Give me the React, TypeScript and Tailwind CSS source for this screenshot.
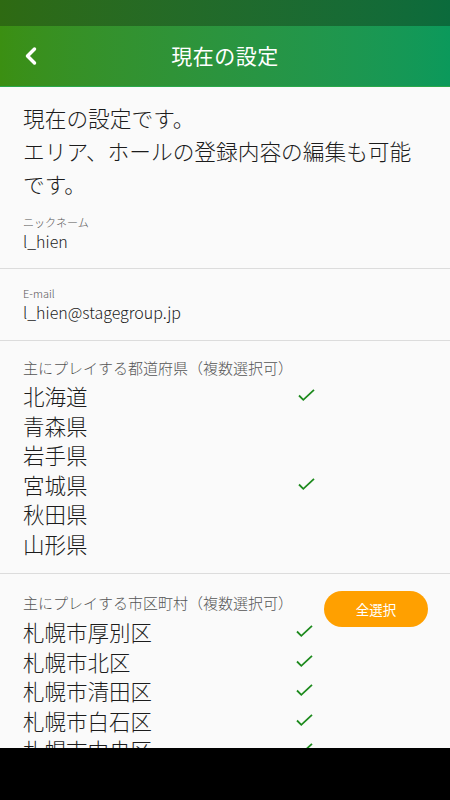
import { ChevronLeft } from 'lucide-react';

const PREFS = [
  { name: '北海道', on: true },
  { name: '青森県', on: false },
  { name: '岩手県', on: false },
  { name: '宮城県', on: true },
  { name: '秋田県', on: false },
  { name: '山形県', on: false },
];

const CITIES = ['札幌市厚別区', '札幌市北区', '札幌市清田区', '札幌市白石区', '札幌市中央区'];

function Check() {
  return (
    <svg width="17" height="13" viewBox="0 0 17 13" className="shrink-0">
      <path d="M1 6.5 L5.3 10.8 L16 0.8" fill="none" stroke="#1d8a1d" strokeWidth="1.8" />
    </svg>
  );
}

function Row({ name, on }: { name: string; on: boolean }) {
  return (
    <div className="flex items-center justify-between h-[29.5px]">
      <span className="text-[21.5px] leading-[29.5px] text-[#1c1c1c]">{name}</span>
      {on && <Check />}
    </div>
  );
}

export default function App() {
  return (
    <div className="h-[800px] w-[450px] flex flex-col overflow-hidden bg-[#fafafa] font-light" style={{ fontFamily: '"Noto Sans CJK JP", "Noto Sans", sans-serif' }}>
      {/* status bar */}
      <div className="h-[26px] shrink-0 bg-linear-to-r from-[#2e6a12] to-[#0b6b3c]" />

      {/* header */}
      <div className="h-[61px] shrink-0 relative flex items-center justify-center bg-linear-to-r from-[#3b8f12] to-[#0b995b] border-b border-[#2aa84a]">
        <button className="absolute left-[17px] top-[16px] text-white">
          <ChevronLeft className="w-[28px] h-[28px]" strokeWidth={3} />
        </button>
        <h1 className="text-[21px] text-white font-normal tracking-[0.5px]">現在の設定</h1>
      </div>

      <div className="flex-1 overflow-hidden">
        <p className="px-[23px] pt-[14px] pb-[15px] text-[21.7px] leading-[33px] text-[#1c1c1c]">
          現在の設定です。<br />エリア、ホールの登録内容の編集も可能です。
        </p>

        <div className="px-[23px] pb-[16px] border-b border-[#dcdcdc]">
          <div className="text-[11px] leading-[15px] text-[#555]">ニックネーム</div>
          <div className="text-[16px] leading-[22px] text-[#1c1c1c]">l_hien</div>
        </div>

        <div className="px-[23px] pt-[17px] pb-[17px] border-b border-[#dcdcdc]">
          <div className="text-[11px] leading-[15px] text-[#555]">E-mail</div>
          <div className="text-[16px] leading-[22px] text-[#1c1c1c]">l_hien@stagegroup.jp</div>
        </div>

        <div className="px-[23px] pt-[17px] pb-[15px] border-b border-[#dcdcdc]">
          <div className="w-[292px]">
            <div className="text-[15px] leading-[20px] text-[#555]">主にプレイする都道府県（複数選択可）</div>
            <div className="mt-[3px]">
              {PREFS.map(p => <Row key={p.name} name={p.name} on={p.on} />)}
            </div>
          </div>
        </div>

        <div className="pl-[23px] pr-[22px] pt-[17px] flex items-start">
          <div className="w-[290px] pt-[2px]">
            <div className="text-[15px] leading-[20px] text-[#555]">主にプレイする市区町村（複数選択可）</div>
            <div className="mt-[4px]">
              {CITIES.map(c => <Row key={c} name={c} on />)}
            </div>
          </div>
          <button className="ml-auto w-[104px] h-[36px] rounded-full bg-[#ffa000] text-white font-normal text-[13.5px]">全選択</button>
        </div>
      </div>

      {/* nav bar */}
      <div className="h-[52px] shrink-0 bg-black" />
    </div>
  );
}
